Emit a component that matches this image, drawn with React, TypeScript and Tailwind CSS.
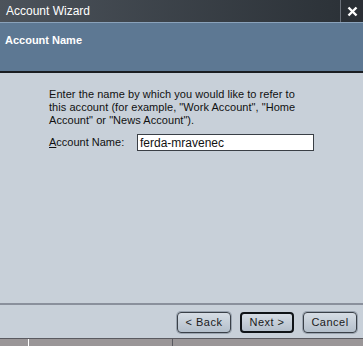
import React from 'react';

const font = { fontFamily: '"Liberation Sans", Arial, sans-serif' };

function WizardButton({ label, primary }: { label: string; primary?: boolean }) {
  return (
    <button
      className={`h-[21px] w-[54px] rounded-[4px] bg-gradient-to-b from-[#d6dde5] to-[#b4bfcb] text-[11px] tracking-[0.5px] text-[#1a1a1a] ${
        primary ? 'border-2 border-[#101418]' : 'border border-[#3a4048] ring-1 ring-[#9aa4b0]'
      }`}
    >
      {label}
    </button>
  );
}

export default function App() {
  return (
    <div className="w-[363px] h-[346px] flex flex-col bg-[#c8d0d9] overflow-hidden" style={font}>
      {/* title bar */}
      <div className="h-[22px] flex bg-[#22262b]">
        <div className="flex-1 flex items-center pl-[6px] text-[12px] text-white bg-gradient-to-r from-[#4c535b] to-[#2c3238] border-r border-[#6a7079]">
          Account Wizard
        </div>
        <div className="w-[22px] flex items-center justify-center bg-[#2a2f35]">
          <svg width="11" height="11" viewBox="0 0 11 11">
            <path d="M1.5 1.5 L9.5 9.5 M9.5 1.5 L1.5 9.5" stroke="white" strokeWidth="2.4" />
          </svg>
        </div>
      </div>
      <div className="h-px bg-[#8aa2ba]" />

      {/* header */}
      <div className="h-[50px] bg-[#5d7893] border-b-2 border-[#1a1d22] pl-[5px] pt-[9px] leading-[14px]">
        <span className="text-[11px] font-bold text-white">Account Name</span>
      </div>

      {/* body */}
      <div className="flex-1 pl-[49px] pt-[15px] text-[11px] text-[#111]">
        <p className="leading-[13px] w-[262px] tracking-[0.05px]">
          Enter the name by which you would like to refer to this account (for example, "Work Account", "Home
          Account" or "News Account").
        </p>
        <div className="flex items-center mt-[7px]">
          <span className="w-[88px]">
            <span className="underline">A</span>ccount Name:
          </span>
          <div className="w-[177px] h-[17px] bg-white border border-[#3a3f46] flex items-center pl-[2px] text-[12px]">
            ferda-mravenec
          </div>
        </div>
      </div>

      {/* footer */}
      <div className="h-[2px] bg-[#8a909c]" />
      <div className="h-[33px] flex items-center justify-end gap-[9px] pr-[6px] pt-[2px]">
        <WizardButton label="< Back" />
        <WizardButton label="Next >" primary />
        <WizardButton label="Cancel" />
      </div>
      <div className="h-[8px] flex bg-[#9a9698] border-t border-[#5a5a60]">
        <div className="w-[28px]" />
        <div className="w-px bg-white" />
        <div className="w-[143px]" />
        <div className="w-px bg-[#5a5a60]" />
      </div>
    </div>
  );
}
